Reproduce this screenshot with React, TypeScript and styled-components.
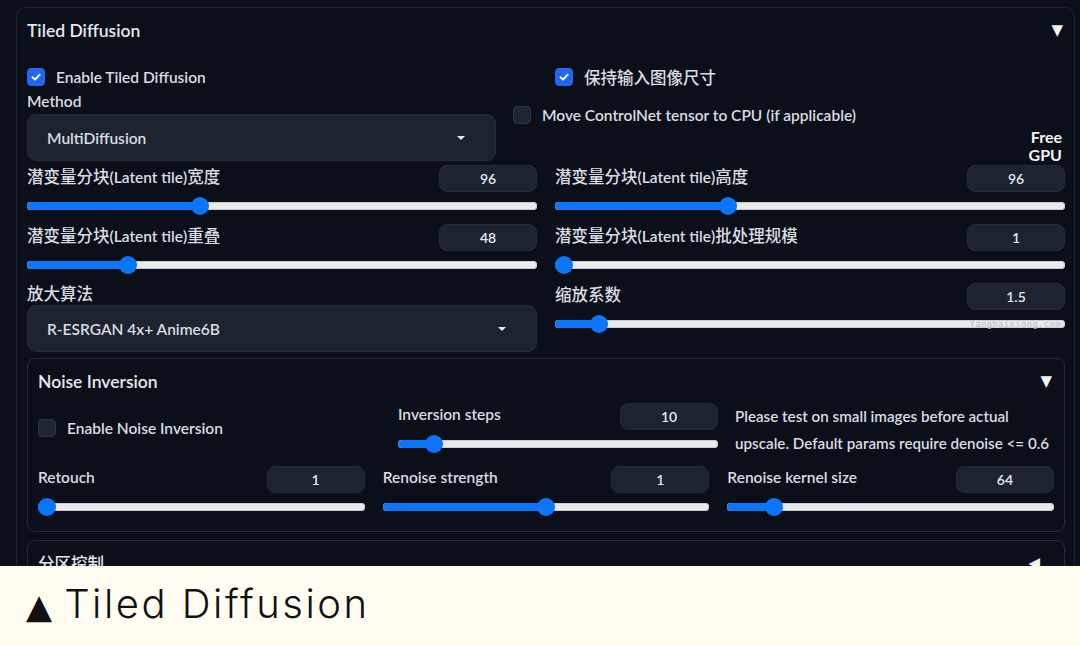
import React from "react";
import styled, { createGlobalStyle } from "styled-components";

const GlobalStyle = createGlobalStyle`
  html, body { margin: 0; padding: 0; background: #0b0f19; }
  * { box-sizing: border-box; }
  body { font-family: Lato, "Noto Sans CJK SC", sans-serif; }
`;

const UI_FONT = `Lato, "Noto Sans CJK SC", sans-serif`;

const Page = styled.div`
  width: 1080px;
  height: 646px;
  display: flex;
  flex-direction: column;
  overflow: hidden;
`;

const Stage = styled.div`
  height: 566px;
  flex: none;
  overflow: hidden;
  background: #0b0f19;
  padding: 7px 5px 0 16px;
  font-family: ${UI_FONT};
  color: #e5e7eb;
`;

const Panel = styled.section<{ $inner?: boolean }>`
  border: 1px solid ${(p) => (p.$inner ? "#252d3a" : "#1e2531")};
  border-radius: ${(p) => (p.$inner ? "8px" : "10px")};
  padding: ${(p) => (p.$inner ? "0 10px 20px 10px" : "0 9px 40px 10px")};
  background: #0b0f19;
`;

const PanelHeader = styled.div<{ $h: number }>`
  height: ${(p) => p.$h}px;
  display: flex;
  align-items: center;
  justify-content: space-between;
`;

const PanelTitle = styled.span`
  font-size: 17.5px;
  font-weight: 600;
  color: #e5e7eb;
`;

const Chevron = styled.span<{ $dir?: "down" | "left" }>`
  font-family: "DejaVu Sans", sans-serif;
  font-size: 15px;
  color: #f3f4f6;
  line-height: 1;
  margin-right: ${(p) => (p.$dir === "left" ? "14px" : "2px")};
`;

const Cjk = styled.span`
  font-family: "Noto Sans CJK SC", sans-serif;
  font-size: 16.5px;
  font-weight: 500;
`;

const TwoCols = styled.div<{ $top?: number }>`
  display: grid;
  grid-template-columns: 510px 1fr;
  column-gap: 18px;
  margin-top: ${(p) => p.$top ?? 0}px;
`;

const CheckItem = styled.label`
  display: flex;
  align-items: center;
  gap: 11px;
  font-size: 15.5px;
  font-weight: 600;
  color: #d9dce1;
  height: 18px;
  white-space: nowrap;
`;

const Box = styled.span<{ $on?: boolean }>`
  width: 18px;
  height: 18px;
  flex: none;
  border-radius: 4px;
  background: ${(p) => (p.$on ? "#2466f0" : "#1f2734")};
  border: 1px solid ${(p) => (p.$on ? "#2466f0" : "#2c3544")};
  display: flex;
  align-items: center;
  justify-content: center;
`;

const MethodRow = styled.div`
  display: grid;
  grid-template-columns: 469px 1fr auto;
  column-gap: 17px;
  margin-top: 5px;
`;

const Stack = styled.div<{ $top?: number }>`
  display: flex;
  flex-direction: column;
  margin-top: ${(p) => p.$top ?? 0}px;
`;

const FieldLabel = styled.span<{ $top?: number }>`
  font-size: 15.5px;
  font-weight: 600;
  line-height: 20px;
  height: 20px;
  margin-top: ${(p) => p.$top ?? 0}px;
  color: #d9dce1;
  white-space: nowrap;
`;

const Select = styled.div<{ $top: number }>`
  margin-top: ${(p) => p.$top}px;
  height: 47px;
  border-radius: 9px;
  background: #1d2430;
  border: 1px solid #242c39;
  display: flex;
  align-items: center;
  justify-content: space-between;
  padding: 0 30px 0 19px;
  font-size: 15.5px;
  font-weight: 600;
  color: #d9dce1;
`;

const Caret = styled.span`
  width: 0;
  height: 0;
  border-left: 4px solid transparent;
  border-right: 4px solid transparent;
  border-top: 4px solid #e5e7eb;
`;

const FreeButton = styled.button`
  margin: 37px 0 -3px 0;
  align-self: start;
  background: transparent;
  border: none;
  padding: 0 3px 0 0;
  font-family: ${UI_FONT};
  font-size: 16px;
  font-weight: 700;
  line-height: 18px;
  color: #f3f4f6;
  text-align: right;
`;

const SliderHead = styled.div`
  height: 27px;
  display: flex;
  justify-content: space-between;
  align-items: flex-start;
`;

const NumBox = styled.div`
  width: 98px;
  height: 27px;
  border-radius: 8px;
  background: #1d2430;
  border: 1px solid #232b38;
  display: flex;
  align-items: center;
  justify-content: center;
  font-size: 14px;
  font-weight: 600;
  color: #e5e7eb;
`;

const SliderWrap = styled.div<{ $bottom: number }>`
  padding-top: 10px;
  margin-bottom: ${(p) => p.$bottom}px;
`;

const Track = styled.div`
  position: relative;
  height: 8px;
  border-radius: 4px;
  background: #e9eaec;
  box-shadow: inset 0 0 0 1px #c9ccd1;
`;

const Fill = styled.div`
  position: absolute;
  left: 0;
  top: 0;
  bottom: 0;
  border-radius: 4px;
  background: #0b76fa;
`;

const Thumb = styled.div`
  position: absolute;
  top: 50%;
  width: 18px;
  height: 18px;
  margin: -9px 0 0 -9px;
  border-radius: 50%;
  background: #0b76fa;
`;

const Watermark = styled.span`
  position: absolute;
  right: 4px;
  top: -1px;
  font-family: "DejaVu Sans Mono", monospace;
  font-size: 9px;
  line-height: 10px;
  color: #b9bcc2;
  letter-spacing: 0.3px;
`;

const RowA = styled.div`
  display: grid;
  grid-template-columns: 343px 320px 1fr;
  column-gap: 17px;
`;

const RowB = styled.div`
  display: grid;
  grid-template-columns: repeat(3, 1fr);
  column-gap: 18px;
  margin-top: 9px;
`;

const Note = styled.p`
  margin: 0;
  font-size: 15.2px;
  font-weight: 600;
  line-height: 27px;
  color: #d9dce1;
  white-space: nowrap;
`;

const Caption = styled.div`
  flex: 1;
  background: #fffdf2;
  display: flex;
  align-items: center;
  gap: 12px;
  padding: 0 0 4px 26px;
  color: #111;
`;

const CaptionMark = styled.span`
  font-family: "DejaVu Sans", sans-serif;
  font-size: 34px;
  line-height: 1;
  margin-top: 3px;
`;

const CaptionText = styled.span`
  font-family: Inter, sans-serif;
  font-weight: 300;
  font-size: 40px;
  letter-spacing: 2.5px;
  line-height: 1;
`;

const Check = () => (
  <svg width="12" height="12" viewBox="0 0 12 12">
    <path d="M2.5 6.3 L5 8.6 L9.6 3.6" fill="none" stroke="#fff" strokeWidth="1.9" strokeLinecap="round" strokeLinejoin="round" />
  </svg>
);

type SliderProps = {
  label: React.ReactNode;
  value: string;
  frac: number;
  bottom?: number;
  watermark?: boolean;
};

const Slider = ({ label, value, frac, bottom = 14, watermark }: SliderProps) => (
  <div>
    <SliderHead>
      <FieldLabel $top={1}>{label}</FieldLabel>
      <NumBox>{value}</NumBox>
    </SliderHead>
    <SliderWrap $bottom={bottom}>
      <Track>
        <Fill style={{ width: `calc(9px + (100% - 18px) * ${frac})` }} />
        <Thumb style={{ left: `calc(9px + (100% - 18px) * ${frac})` }} />
        {watermark && <Watermark>Yanghaixiong.com</Watermark>}
      </Track>
    </SliderWrap>
  </div>
);

const TileLabel = ({ suffix }: { suffix: string }) => (
  <>
    <Cjk>潜变量分块</Cjk>(Latent tile)<Cjk>{suffix}</Cjk>
  </>
);

export default function App() {
  return (
    <Page>
      <GlobalStyle />
      <Stage>
        <Panel>
          <PanelHeader $h={44}>
            <PanelTitle>Tiled Diffusion</PanelTitle>
            <Chevron>▼</Chevron>
          </PanelHeader>

          <TwoCols $top={16}>
            <CheckItem>
              <Box $on>
                <Check />
              </Box>
              Enable Tiled Diffusion
            </CheckItem>
            <CheckItem>
              <Box $on>
                <Check />
              </Box>
              <Cjk>保持输入图像尺寸</Cjk>
            </CheckItem>
          </TwoCols>

          <MethodRow>
            <Stack>
              <FieldLabel>Method</FieldLabel>
              <Select $top={3}>
                MultiDiffusion
                <Caret />
              </Select>
            </Stack>
            <Stack $top={15}>
              <CheckItem>
                <Box />
                Move ControlNet tensor to CPU (if applicable)
              </CheckItem>
            </Stack>
            <FreeButton>
              Free
              <br />
              GPU
            </FreeButton>
          </MethodRow>

          <TwoCols $top={4}>
            <Stack>
              <Slider label={<TileLabel suffix="宽度" />} value="96" frac={80 / 240} />
              <Slider label={<TileLabel suffix="重叠" />} value="48" frac={48 / 256} />
              <FieldLabel $top={0}>
                <Cjk>放大算法</Cjk>
              </FieldLabel>
              <Select $top={2}>
                R-ESRGAN 4x+ Anime6B
                <Caret />
              </Select>
            </Stack>
            <Stack>
              <Slider label={<TileLabel suffix="高度" />} value="96" frac={80 / 240} />
              <Slider label={<TileLabel suffix="批处理规模" />} value="1" frac={0} />
              <Slider label={<Cjk>缩放系数</Cjk>} value="1.5" frac={0.5 / 7} watermark />
            </Stack>
          </TwoCols>

          <Panel $inner style={{ marginTop: 6 }}>
            <PanelHeader $h={44}>
              <PanelTitle>Noise Inversion</PanelTitle>
              <Chevron>▼</Chevron>
            </PanelHeader>
            <RowA>
              <Stack $top={16}>
                <CheckItem>
                  <Box />
                  Enable Noise Inversion
                </CheckItem>
              </Stack>
              <Slider label="Inversion steps" value="10" frac={9 / 99} bottom={0} />
              <Note>
                Please test on small images before actual
                <br />
                upscale. Default params require denoise &lt;= 0.6
              </Note>
            </RowA>
            <RowB>
              <Slider label="Retouch" value="1" frac={0} bottom={0} />
              <Slider label="Renoise strength" value="1" frac={0.5} bottom={0} />
              <Slider label="Renoise kernel size" value="64" frac={62 / 510} bottom={0} />
            </RowB>
          </Panel>

          <Panel $inner style={{ marginTop: 8 }}>
            <PanelHeader $h={44}>
              <PanelTitle>
                <Cjk>分区控制</Cjk>
              </PanelTitle>
              <Chevron $dir="left">◀</Chevron>
            </PanelHeader>
          </Panel>
        </Panel>
      </Stage>
      <Caption>
        <CaptionMark>▲</CaptionMark>
        <CaptionText>Tiled Diffusion</CaptionText>
      </Caption>
    </Page>
  );
}
